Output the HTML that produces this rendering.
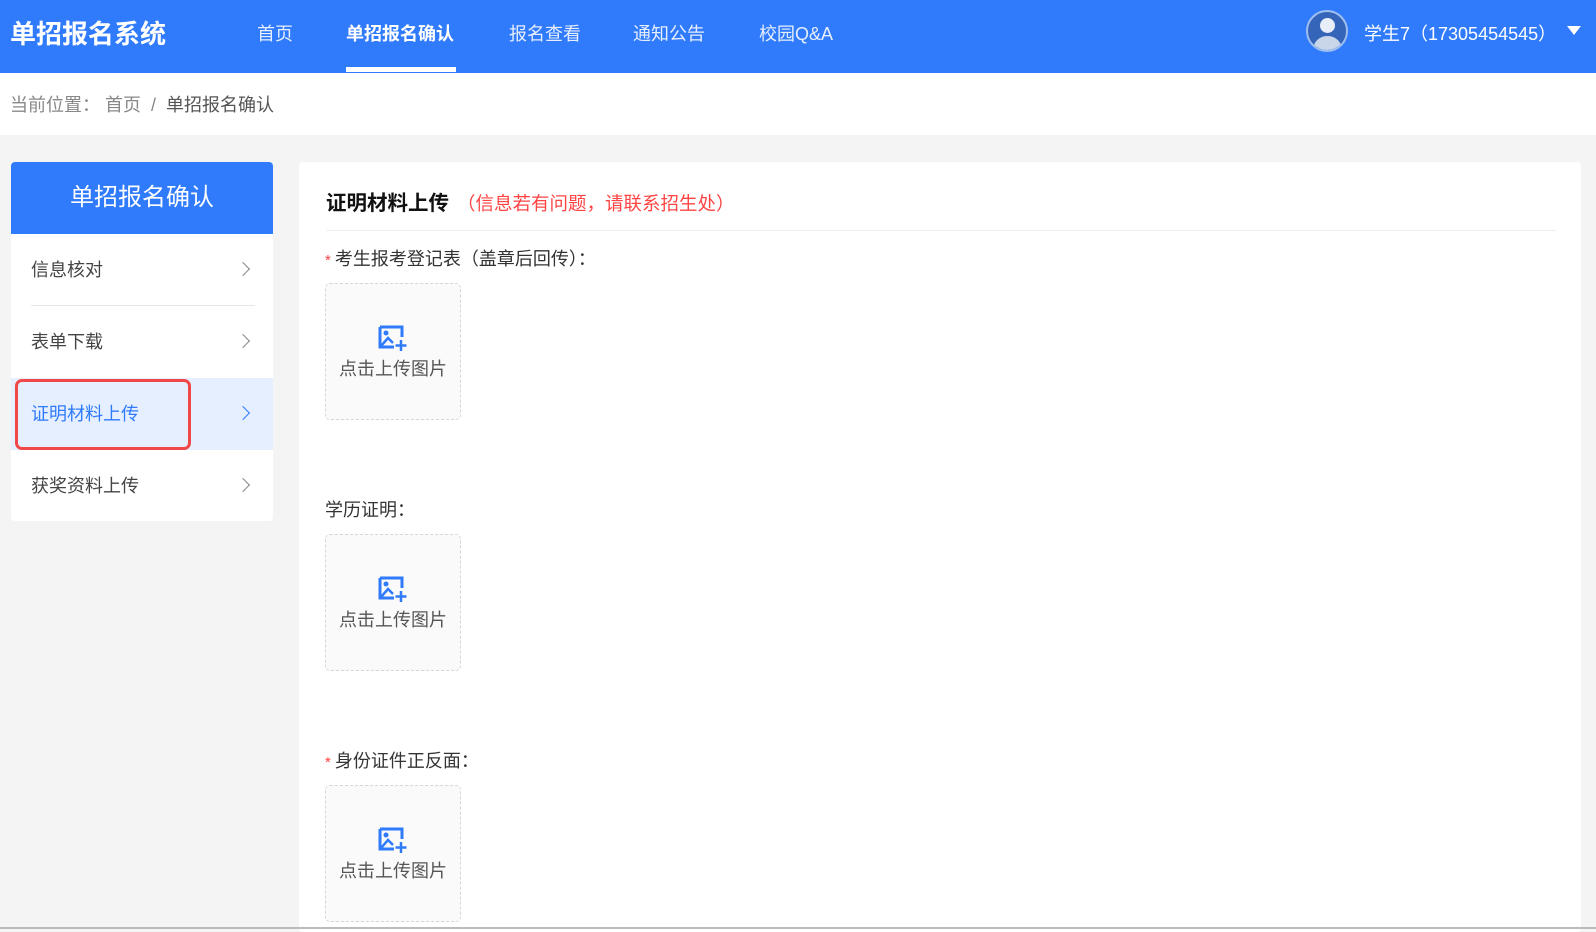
<!DOCTYPE html>
<html><head><meta charset="utf-8"><style>
*{margin:0;padding:0;box-sizing:border-box}
body{width:1596px;height:929px;overflow:hidden;background:#f4f4f4;font-family:"Liberation Sans","Noto Sans CJK SC",sans-serif;position:relative;color:#333}
.hd{position:absolute;left:0;top:0;width:1596px;height:73px;background:#2f7bfc;color:#fff}
.logo{position:absolute;left:10px;top:14px;font-size:26px;font-weight:bold;letter-spacing:0px}
.nav{position:absolute;top:20px;font-size:18px;color:#e6eeff}
.nav.act{font-weight:bold;color:#fff}
.ul{position:absolute;left:346px;top:67px;width:110px;height:5px;background:#fff}
.av{position:absolute;left:1306px;top:10px;width:42px;height:42px;border-radius:50%;background:#3565b8;border:2px solid #9fbef0;overflow:hidden}
.av .h{position:absolute;left:12px;top:6px;width:15px;height:15px;border-radius:50%;background:#e8eef8}
.av .b{position:absolute;left:5px;top:24px;width:29px;height:20px;border-radius:14px 14px 0 0;background:#c9d6ea}
.user{position:absolute;left:1364px;top:20px;font-size:18px;color:#fff}
.tri{position:absolute;left:1567px;top:26px;width:0;height:0;border-left:7px solid transparent;border-right:7px solid transparent;border-top:9px solid #fff}
.bc{position:absolute;left:0;top:73px;width:1596px;height:62px;background:#fff;font-size:18px;color:#888;padding:18px 0 0 10px}
.bc b{font-weight:normal;color:#555}
.side{position:absolute;left:11px;top:162px;width:262px;height:359px;background:#fff;border-radius:4px;overflow:hidden}
.sh{height:72px;background:#2f7bfc;color:#fff;font-size:24px;text-align:center;line-height:72px}
.it{position:relative;height:72px;line-height:72px;font-size:18px;color:#444;padding-left:20px}
.it .ln{position:absolute;left:20px;right:18px;bottom:0;height:1px;background:#e6e6e6}
.it .ch{position:absolute;right:25px;top:30px;width:10px;height:10px;border-right:1.5px solid #888;border-top:1.5px solid #888;transform:rotate(45deg)}
.it.a{background:#e6efff;color:#2f7bfc}
.it.a .ch{border-color:#2f7bfc}
.red{position:absolute;left:15px;top:379px;width:176px;height:71px;border:3px solid #f04848;border-radius:7px}
.main{position:absolute;left:299px;top:162px;width:1282px;height:770px;background:#fff;border-radius:4px}
.tt{position:absolute;left:27px;top:24px;font-size:20.5px;font-weight:bold;color:#111}
.tt span{font-weight:normal;color:#f44;font-size:18.5px;margin-left:8px}
.dv{position:absolute;left:27px;top:68px;width:1230px;height:1px;background:#eee}
.lb{position:absolute;left:26px;font-size:18px;color:#333}
.lb i{font-style:normal;color:#f44;font-size:15px;margin-right:4px}
.up{position:absolute;left:26px;width:136px;height:137px;border:1px dashed #d6d6d6;border-radius:5px;background:#fafafa;text-align:center}
.up svg{position:absolute;left:52px;top:41px}
.up div{position:absolute;left:0;width:100%;top:71px;font-size:18px;color:#555}
</style></head><body>
<div class="hd">
<div class="logo">单招报名系统</div>
<div class="nav" style="left:257px">首页</div>
<div class="nav act" style="left:346px">单招报名确认</div>
<div class="nav" style="left:509px">报名查看</div>
<div class="nav" style="left:633px">通知公告</div>
<div class="nav" style="left:759px">校园Q&amp;A</div>
<div class="ul"></div>
<div class="av"><div class="h"></div><div class="b"></div></div>
<div class="user">学生7（17305454545）</div>
<div class="tri"></div>
</div>
<div class="bc">当前位置：&nbsp;首页 &nbsp;/&nbsp; <b>单招报名确认</b></div>
<div class="side">
<div class="sh">单招报名确认</div>
<div class="it">信息核对<div class="ln"></div><div class="ch"></div></div>
<div class="it">表单下载<div class="ch"></div></div>
<div class="it a">证明材料上传<div class="ch"></div></div>
<div class="it">获奖资料上传<div class="ch"></div></div>
</div>
<div class="red"></div>
<div class="main">
<div class="tt">证明材料上传<span>（信息若有问题，请联系招生处）</span></div>
<div class="dv"></div>
<div class="lb" style="top:83px"><i>*</i>考生报考登记表（盖章后回传）：</div>
<div class="up" style="top:121px"><svg width="30" height="27" viewBox="0 0 30 27"><path d="M2 2h22v10M2 2v20h14" fill="none" stroke="#2f7bfc" stroke-width="3"/><circle cx="8" cy="8" r="2.5" fill="#2f7bfc"/><path d="M3 21l7-8 5 5" fill="none" stroke="#2f7bfc" stroke-width="2.5"/><path d="M23 15v11M17.5 20.5h11" stroke="#2f7bfc" stroke-width="2.5"/></svg><div>点击上传图片</div></div>
<div class="lb" style="top:334px">学历证明：</div>
<div class="up" style="top:372px"><svg width="30" height="27" viewBox="0 0 30 27"><path d="M2 2h22v10M2 2v20h14" fill="none" stroke="#2f7bfc" stroke-width="3"/><circle cx="8" cy="8" r="2.5" fill="#2f7bfc"/><path d="M3 21l7-8 5 5" fill="none" stroke="#2f7bfc" stroke-width="2.5"/><path d="M23 15v11M17.5 20.5h11" stroke="#2f7bfc" stroke-width="2.5"/></svg><div>点击上传图片</div></div>
<div class="lb" style="top:585px"><i>*</i>身份证件正反面：</div>
<div class="up" style="top:623px"><svg width="30" height="27" viewBox="0 0 30 27"><path d="M2 2h22v10M2 2v20h14" fill="none" stroke="#2f7bfc" stroke-width="3"/><circle cx="8" cy="8" r="2.5" fill="#2f7bfc"/><path d="M3 21l7-8 5 5" fill="none" stroke="#2f7bfc" stroke-width="2.5"/><path d="M23 15v11M17.5 20.5h11" stroke="#2f7bfc" stroke-width="2.5"/></svg><div>点击上传图片</div></div>
</div>
<div style="position:absolute;left:0;top:927px;width:1596px;height:2px;background:#bbb"></div>
</body></html>
